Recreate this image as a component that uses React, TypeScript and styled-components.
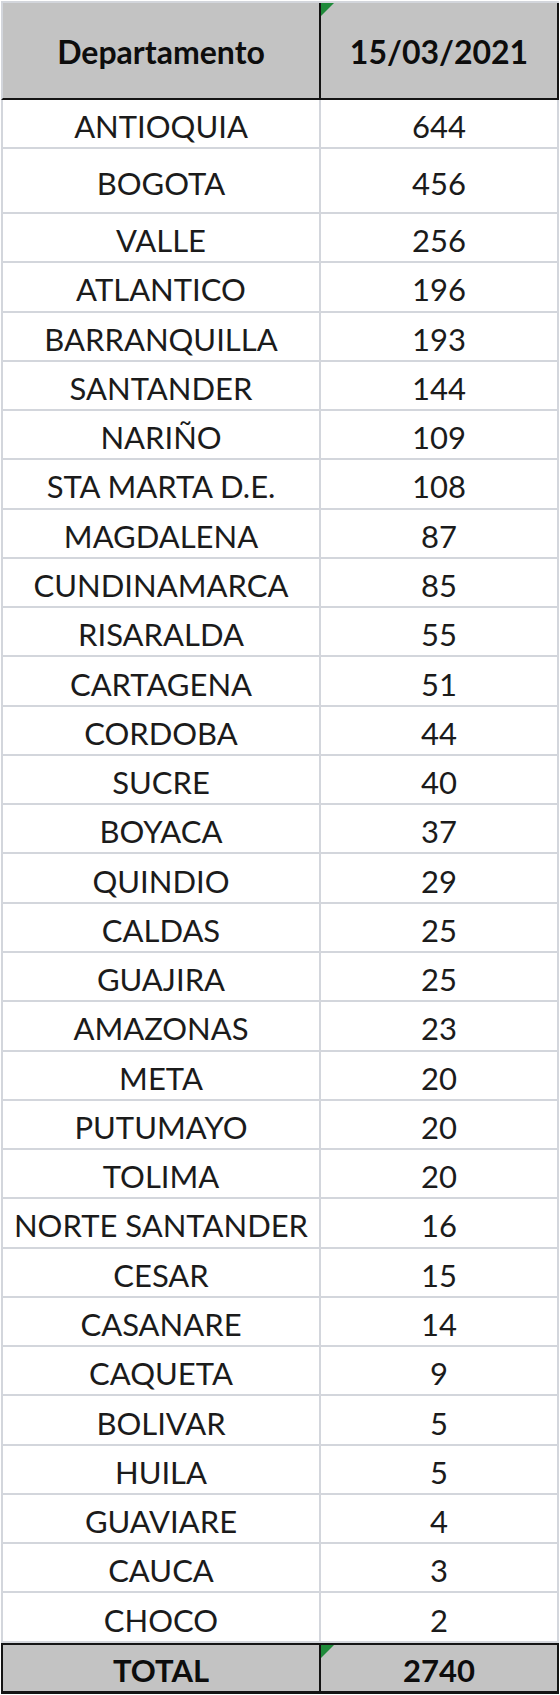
import React from "react";
import styled, { createGlobalStyle, css } from "styled-components";

const Global = createGlobalStyle`
  html, body { margin: 0; padding: 0; background: #ffffff; }
  body { font-family: Lato, "Open Sans", sans-serif; }
`;

const GRID = "#d3d6dc";
const DARK = "#141414";
const HEAD_BG = "#c3c3c3";

const Sheet = styled.div`
  width: 558px;
  margin: 1px 0 0 1px;
  display: flex;
  flex-direction: column;
`;

type RowKind = "head" | "data" | "total";

const Row = styled.div<{ $kind: RowKind; $h: number }>`
  display: grid;
  grid-template-columns: 318px 238px;
  box-sizing: border-box;
  height: ${(p) => p.$h}px;
  border-left: 2px solid ${GRID};
  border-bottom: 2px solid ${GRID};
  ${(p) =>
    p.$kind === "head" &&
    css`
      border-top: 2px solid ${GRID};
      border-bottom: 2px solid ${DARK};
      background: ${HEAD_BG};
    `}
  ${(p) =>
    p.$kind === "total" &&
    css`
      border-left: 2px solid ${DARK};
      border-top: 2px solid ${DARK};
      border-bottom: 3px solid ${DARK};
      background: ${HEAD_BG};
    `}
`;

const Cell = styled.div<{ $kind: RowKind; $flag?: boolean }>`
  position: relative;
  box-sizing: border-box;
  display: flex;
  align-items: center;
  justify-content: center;
  padding-top: ${(p) => (p.$kind === "head" ? 2 : 5)}px;
  border-right: 2px solid ${(p) => (p.$kind === "data" ? GRID : DARK)};
  font-size: ${(p) => (p.$kind === "head" ? 32 : 31)}px;
  font-weight: ${(p) => (p.$kind === "data" ? 400 : 700)};
  color: ${(p) => (p.$kind === "data" ? "#1b1b1b" : "#0d0d0d")};
  white-space: nowrap;
  ${(p) =>
    p.$flag &&
    css`
      &::before {
        content: "";
        position: absolute;
        top: 0;
        left: 0;
        width: 0;
        height: 0;
        border-top: 13px solid #1f8a3a;
        border-right: 13px solid transparent;
      }
    `}
`;

const rows: [string, number][] = [
  ["ANTIOQUIA", 644],
  ["BOGOTA", 456],
  ["VALLE", 256],
  ["ATLANTICO", 196],
  ["BARRANQUILLA", 193],
  ["SANTANDER", 144],
  ["NARIÑO", 109],
  ["STA MARTA D.E.", 108],
  ["MAGDALENA", 87],
  ["CUNDINAMARCA", 85],
  ["RISARALDA", 55],
  ["CARTAGENA", 51],
  ["CORDOBA", 44],
  ["SUCRE", 40],
  ["BOYACA", 37],
  ["QUINDIO", 29],
  ["CALDAS", 25],
  ["GUAJIRA", 25],
  ["AMAZONAS", 23],
  ["META", 20],
  ["PUTUMAYO", 20],
  ["TOLIMA", 20],
  ["NORTE SANTANDER", 16],
  ["CESAR", 15],
  ["CASANARE", 14],
  ["CAQUETA", 9],
  ["BOLIVAR", 5],
  ["HUILA", 5],
  ["GUAVIARE", 4],
  ["CAUCA", 3],
  ["CHOCO", 2],
];

const rowHeight = (i: number) => (i === 0 ? 49 : i === 1 ? 65 : 49.28);

export default function App() {
  return (
    <>
      <Global />
      <Sheet>
        <Row $kind="head" $h={99}>
          <Cell $kind="head">Departamento</Cell>
          <Cell $kind="head" $flag>
            15/03/2021
          </Cell>
        </Row>
        {rows.map(([name, n], i) => (
          <Row key={name} $kind="data" $h={rowHeight(i)}>
            <Cell $kind="data">{name}</Cell>
            <Cell $kind="data">{n}</Cell>
          </Row>
        ))}
        <Row $kind="total" $h={51}>
          <Cell $kind="total">TOTAL</Cell>
          <Cell $kind="total" $flag>
            2740
          </Cell>
        </Row>
      </Sheet>
    </>
  );
}
